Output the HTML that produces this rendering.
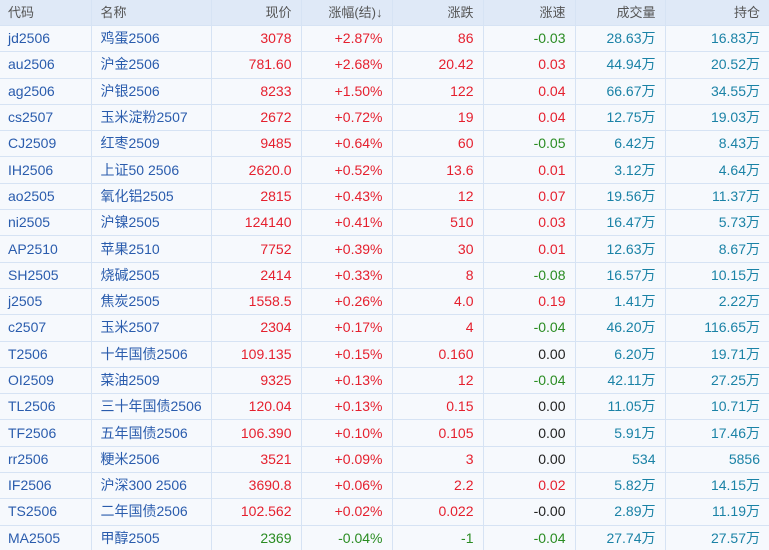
<!DOCTYPE html>
<html><head><meta charset="utf-8"><style>
html,body{margin:0;padding:0;width:769px;height:550px;overflow:hidden;background:#f6f9fd;}
table{border-collapse:collapse;table-layout:fixed;width:769px;font-family:"Liberation Sans","Noto Sans CJK SC",sans-serif;font-size:14px;}
td,th{border:1px solid #d6e3f4;padding:0 9px;white-space:nowrap;overflow:hidden;height:25.3px;line-height:25px;}
th{font-weight:normal;color:#555;height:24px;background:#dfe9f7;font-size:13px;}
tr:first-child th{border-top:none;}
td:first-child,th:first-child{border-left:none;padding-left:8px;}
td:last-child,th:last-child{border-right:none;}
.l{text-align:left}.r{text-align:right}
.c{color:#2a5cad}.n{color:#2a5cad}
.red{color:#e5202e}.grn{color:#2a8c22}.blk{color:#222}.tl{color:#1a82a6}
</style></head><body>
<table>
<colgroup><col style="width:91px"><col style="width:120px"><col style="width:90px"><col style="width:91px"><col style="width:91px"><col style="width:92px"><col style="width:90px"><col style="width:104px"></colgroup>
<tr><th class="l">代码</th><th class="l">名称</th><th class="r">现价</th><th class="r">涨幅(结)↓</th><th class="r">涨跌</th><th class="r">涨速</th><th class="r">成交量</th><th class="r">持仓</th></tr>
<tr><td class="c">jd2506</td><td class="n">鸡蛋2506</td><td class="r red">3078</td><td class="r red">+2.87%</td><td class="r red">86</td><td class="r grn">-0.03</td><td class="r tl">28.63万</td><td class="r tl">16.83万</td></tr>
<tr><td class="c">au2506</td><td class="n">沪金2506</td><td class="r red">781.60</td><td class="r red">+2.68%</td><td class="r red">20.42</td><td class="r red">0.03</td><td class="r tl">44.94万</td><td class="r tl">20.52万</td></tr>
<tr><td class="c">ag2506</td><td class="n">沪银2506</td><td class="r red">8233</td><td class="r red">+1.50%</td><td class="r red">122</td><td class="r red">0.04</td><td class="r tl">66.67万</td><td class="r tl">34.55万</td></tr>
<tr><td class="c">cs2507</td><td class="n">玉米淀粉2507</td><td class="r red">2672</td><td class="r red">+0.72%</td><td class="r red">19</td><td class="r red">0.04</td><td class="r tl">12.75万</td><td class="r tl">19.03万</td></tr>
<tr><td class="c">CJ2509</td><td class="n">红枣2509</td><td class="r red">9485</td><td class="r red">+0.64%</td><td class="r red">60</td><td class="r grn">-0.05</td><td class="r tl">6.42万</td><td class="r tl">8.43万</td></tr>
<tr><td class="c">IH2506</td><td class="n">上证50 2506</td><td class="r red">2620.0</td><td class="r red">+0.52%</td><td class="r red">13.6</td><td class="r red">0.01</td><td class="r tl">3.12万</td><td class="r tl">4.64万</td></tr>
<tr><td class="c">ao2505</td><td class="n">氧化铝2505</td><td class="r red">2815</td><td class="r red">+0.43%</td><td class="r red">12</td><td class="r red">0.07</td><td class="r tl">19.56万</td><td class="r tl">11.37万</td></tr>
<tr><td class="c">ni2505</td><td class="n">沪镍2505</td><td class="r red">124140</td><td class="r red">+0.41%</td><td class="r red">510</td><td class="r red">0.03</td><td class="r tl">16.47万</td><td class="r tl">5.73万</td></tr>
<tr><td class="c">AP2510</td><td class="n">苹果2510</td><td class="r red">7752</td><td class="r red">+0.39%</td><td class="r red">30</td><td class="r red">0.01</td><td class="r tl">12.63万</td><td class="r tl">8.67万</td></tr>
<tr><td class="c">SH2505</td><td class="n">烧碱2505</td><td class="r red">2414</td><td class="r red">+0.33%</td><td class="r red">8</td><td class="r grn">-0.08</td><td class="r tl">16.57万</td><td class="r tl">10.15万</td></tr>
<tr><td class="c">j2505</td><td class="n">焦炭2505</td><td class="r red">1558.5</td><td class="r red">+0.26%</td><td class="r red">4.0</td><td class="r red">0.19</td><td class="r tl">1.41万</td><td class="r tl">2.22万</td></tr>
<tr><td class="c">c2507</td><td class="n">玉米2507</td><td class="r red">2304</td><td class="r red">+0.17%</td><td class="r red">4</td><td class="r grn">-0.04</td><td class="r tl">46.20万</td><td class="r tl">116.65万</td></tr>
<tr><td class="c">T2506</td><td class="n">十年国债2506</td><td class="r red">109.135</td><td class="r red">+0.15%</td><td class="r red">0.160</td><td class="r blk">0.00</td><td class="r tl">6.20万</td><td class="r tl">19.71万</td></tr>
<tr><td class="c">OI2509</td><td class="n">菜油2509</td><td class="r red">9325</td><td class="r red">+0.13%</td><td class="r red">12</td><td class="r grn">-0.04</td><td class="r tl">42.11万</td><td class="r tl">27.25万</td></tr>
<tr><td class="c">TL2506</td><td class="n">三十年国债2506</td><td class="r red">120.04</td><td class="r red">+0.13%</td><td class="r red">0.15</td><td class="r blk">0.00</td><td class="r tl">11.05万</td><td class="r tl">10.71万</td></tr>
<tr><td class="c">TF2506</td><td class="n">五年国债2506</td><td class="r red">106.390</td><td class="r red">+0.10%</td><td class="r red">0.105</td><td class="r blk">0.00</td><td class="r tl">5.91万</td><td class="r tl">17.46万</td></tr>
<tr><td class="c">rr2506</td><td class="n">粳米2506</td><td class="r red">3521</td><td class="r red">+0.09%</td><td class="r red">3</td><td class="r blk">0.00</td><td class="r tl">534</td><td class="r tl">5856</td></tr>
<tr><td class="c">IF2506</td><td class="n">沪深300 2506</td><td class="r red">3690.8</td><td class="r red">+0.06%</td><td class="r red">2.2</td><td class="r red">0.02</td><td class="r tl">5.82万</td><td class="r tl">14.15万</td></tr>
<tr><td class="c">TS2506</td><td class="n">二年国债2506</td><td class="r red">102.562</td><td class="r red">+0.02%</td><td class="r red">0.022</td><td class="r blk">-0.00</td><td class="r tl">2.89万</td><td class="r tl">11.19万</td></tr>
<tr><td class="c">MA2505</td><td class="n">甲醇2505</td><td class="r grn">2369</td><td class="r grn">-0.04%</td><td class="r grn">-1</td><td class="r grn">-0.04</td><td class="r tl">27.74万</td><td class="r tl">27.57万</td></tr>
</table>
</body></html>
